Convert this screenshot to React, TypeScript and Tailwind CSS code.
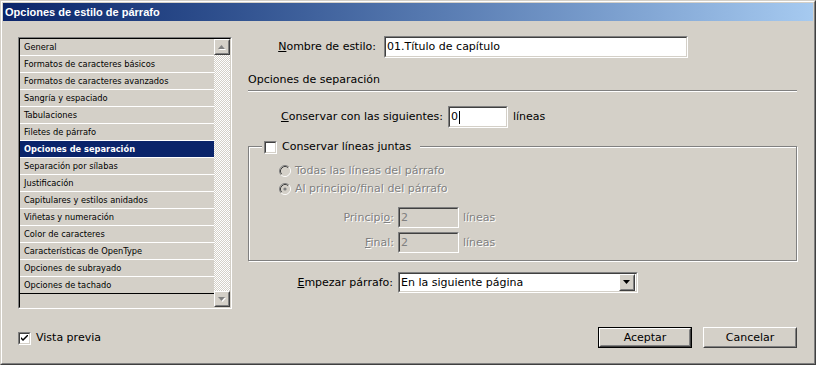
import type { ReactNode } from "react";

const items = [
  "General",
  "Formatos de caracteres básicos",
  "Formatos de caracteres avanzados",
  "Sangría y espaciado",
  "Tabulaciones",
  "Filetes de párrafo",
  "Opciones de separación",
  "Separación por sílabas",
  "Justificación",
  "Capitulares y estilos anidados",
  "Viñetas y numeración",
  "Color de caracteres",
  "Características de OpenType",
  "Opciones de subrayado",
  "Opciones de tachado",
];

const disabledText = "text-[#808080] [text-shadow:1px_1px_0_#fff]";

// borde hundido estilo Win2000 (campos, listas, casillas)
function Sunken({ className = "", inner = "", children }: { className?: string; inner?: string; children?: ReactNode }) {
  return (
    <div className={`border border-t-[#808080] border-l-[#808080] border-b-white border-r-white ${className}`}>
      <div className={`h-full border border-t-[#404040] border-l-[#404040] border-b-[#d4d0c8] border-r-[#d4d0c8] ${inner}`}>
        {children}
      </div>
    </div>
  );
}

function Raised({ className = "", children }: { className?: string; children?: ReactNode }) {
  return (
    <div className={`border border-t-white border-l-white border-b-[#404040] border-r-[#404040] ${className}`}>
      <div className="flex h-full items-center justify-center border border-t-[#d4d0c8] border-l-[#d4d0c8] border-b-[#808080] border-r-[#808080] bg-[#d4d0c8]">
        {children}
      </div>
    </div>
  );
}

function Arrow({ down = false, disabled = false }: { down?: boolean; disabled?: boolean }) {
  const pts = down ? "0,0 7,0 3.5,4" : "3.5,0 7,4 0,4";
  return (
    <svg width="8" height="5" viewBox="0 0 8 5" className="overflow-visible">
      {disabled ? <polygon points={pts} fill="#fff" transform="translate(1 1)" /> : null}
      <polygon points={pts} fill={disabled ? "#808080" : "#000"} />
    </svg>
  );
}

function Checkbox({ checked = false }: { checked?: boolean }) {
  return (
    <Sunken className="h-[13px] w-[13px] shrink-0" inner="bg-white flex items-center justify-center">
      {checked ? (
        <svg width="7" height="7" viewBox="0 0 7 7">
          <path d="M0 2 L0 4 L2 6 L7 1 L7 -1 L2 4 Z" fill="#000" />
        </svg>
      ) : null}
    </Sunken>
  );
}

function Radio({ checked = false }: { checked?: boolean }) {
  return (
    <svg width="12" height="12" viewBox="0 0 12 12" className="shrink-0">
      <circle cx="6" cy="6" r="5" fill="#d4d0c8" />
      <path d="M2.11 9.89 A5.5 5.5 0 0 1 9.89 2.11" fill="none" stroke="#808080" />
      <path d="M9.89 2.11 A5.5 5.5 0 0 1 2.11 9.89" fill="none" stroke="#fff" />
      <path d="M2.82 9.18 A4.5 4.5 0 0 1 9.18 2.82" fill="none" stroke="#404040" />
      <path d="M9.18 2.82 A4.5 4.5 0 0 1 2.82 9.18" fill="none" stroke="#d4d0c8" />
      {checked ? <circle cx="6" cy="6" r="1.6" fill="#808080" /> : null}
    </svg>
  );
}

function Field({ width, value, disabled = false, caret = false }: { width: string; value: string; disabled?: boolean; caret?: boolean }) {
  return (
    <Sunken
      className={`${width} h-[21px] shrink-0`}
      inner={`${disabled ? "bg-[#d4d0c8] text-[#808080]" : "bg-white text-black"} flex items-center pl-[1px]`}
    >
      <span>{value}</span>
      {caret ? <span className="ml-px h-[13px] w-px bg-black" /> : null}
    </Sunken>
  );
}

function ListBox() {
  return (
    <Sunken className="h-[272px] w-[214px]" inner="flex border-t-black border-l-black">
      <div className="flex w-[194px] flex-col bg-[#d4d0c8] font-['DejaVu_Sans_Condensed','DejaVu_Sans',sans-serif] text-[9.2px] text-black">
        {items.map((label, i) => {
          const selected = label === "Opciones de separación";
          return (
            <div
              key={label}
              className={`flex h-[17px] shrink-0 items-center border-b pl-[4px] ${
                i === items.length - 1 ? "border-black" : "border-white"
              } ${selected ? "bg-[#0a246a] font-bold text-white" : ""}`}
            >
              {label}
            </div>
          );
        })}
      </div>
      <div className="flex w-[16px] flex-col">
        <Raised className="h-[16px] w-[16px] shrink-0">
          <Arrow disabled />
        </Raised>
        <div className="flex-1 bg-[repeating-conic-gradient(#ffffff_0_25%,#d4d0c8_0_50%)] bg-[length:2px_2px]" />
        <Raised className="h-[16px] w-[16px] shrink-0">
          <Arrow down disabled />
        </Raised>
      </div>
    </Sunken>
  );
}

export default function App() {
  return (
    <div className="h-[365px] w-[816px] select-none border border-t-[#d4d0c8] border-l-[#d4d0c8] border-r-[#404040] border-b-[#404040] bg-[#d4d0c8] font-['DejaVu_Sans',sans-serif] text-[11px] leading-[14px] text-black">
      <div className="flex h-full flex-col border border-t-white border-l-white border-r-[#808080] border-b-[#808080] p-px">
        <div className="flex h-[18px] shrink-0 items-center bg-gradient-to-r from-[#0a246a] to-[#a6caf0] pl-[2px] font-['Liberation_Sans',sans-serif] text-[11px] font-bold text-white">
          Opciones de estilo de párrafo
        </div>

        <div className="flex flex-1">
          {/* columna izquierda */}
          <div className="ml-[15px] mt-[16px] flex flex-col">
            <ListBox />
            <div className="mt-[22px] flex items-center gap-[5px]">
              <Checkbox checked />
              <span>Vista previa</span>
            </div>
          </div>

          {/* columna derecha */}
          <div className="ml-[16px] flex w-[549px] flex-col">
            <div className="mt-[15px] flex items-center gap-[8px]">
              <span className="w-[128px] text-right">
                <u>N</u>ombre de estilo:
              </span>
              <Field width="w-[304px] !h-[22px]" value="01.Título de capítulo" />
            </div>

            <div className="mt-[15px] h-[14px]">Opciones de separación</div>
            <div className="mt-[3px] h-[2px] border-t border-b border-t-[#808080] border-b-white" />

            <div className="mt-[14px] flex items-center gap-[5px]">
              <span className="w-[195px] text-right">
                <u>C</u>onservar con las siguientes:
              </span>
              <Field width="w-[60px] !h-[22px]" value="0" caret />
              <span>líneas</span>
            </div>

            <div className="relative mt-[18px] h-[115px] border border-[#808080] shadow-[inset_1px_1px_0_#fff,1px_1px_0_#fff]">
              <div className="absolute -top-[7px] left-[13px] flex items-center gap-[5px] bg-[#d4d0c8] px-[2px]">
                <Checkbox />
                <span>Conservar líneas juntas</span>
                <span className="w-[2px]" />
              </div>

              <div className="ml-[30px] mt-[17px] flex flex-col gap-[4px]">
                <div className="flex items-center gap-[4px]">
                  <Radio />
                  <span className={disabledText}>Todas las líneas del párrafo</span>
                </div>
                <div className="flex items-center gap-[4px]">
                  <Radio checked />
                  <span className={disabledText}>Al principio/final del párrafo</span>
                </div>
              </div>

              <div className="mt-[11px] flex flex-col gap-[4px]">
                <div className="flex items-center gap-[4px]">
                  <span className={`w-[145px] text-right ${disabledText}`}>
                    Principi<u>o</u>:
                  </span>
                  <Field width="w-[61px]" value="2" disabled />
                  <span className={disabledText}>líneas</span>
                </div>
                <div className="flex items-center gap-[4px]">
                  <span className={`w-[145px] text-right ${disabledText}`}>
                    <u>F</u>inal:
                  </span>
                  <Field width="w-[61px]" value="2" disabled />
                  <span className={disabledText}>líneas</span>
                </div>
              </div>
            </div>

            <div className="mt-[11px] flex items-center gap-[5px]">
              <span className="w-[145px] text-right">
                <u>E</u>mpezar párrafo:
              </span>
              <Sunken className="h-[21px] w-[240px]" inner="flex items-center bg-white pl-[1px] pr-px">
                <span className="flex-1">En la siguiente página</span>
                <Raised className="h-[17px] w-[16px]">
                  <Arrow down />
                </Raised>
              </Sunken>
            </div>

            <div className="mt-[34px] flex justify-end gap-[11px]">
              <div className="h-[21px] w-[94px] border border-black">
                <Raised className="h-full w-full">Aceptar</Raised>
              </div>
              <Raised className="h-[21px] w-[94px]">Cancelar</Raised>
            </div>
          </div>
        </div>
      </div>
    </div>
  );
}
